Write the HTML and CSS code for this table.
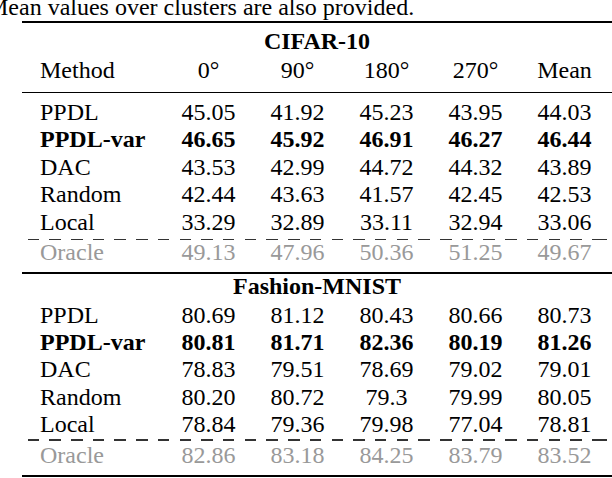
FILE: index.html
```html
<!DOCTYPE html>
<html>
<head>
<meta charset="utf-8">
<link rel="stylesheet" href="styles.css">
</head>
<body>
<div class="page">
<div class="caption">Mean values over clusters are also provided.</div>
<div class="table">
  <section class="group cifar">
    <div class="title">CIFAR-10</div>
    <div class="row head"><span>Method</span><span>0°</span><span>90°</span><span>180°</span><span>270°</span><span>Mean</span></div>
    <div class="body">
      <div class="row"><span>PPDL</span><span>45.05</span><span>41.92</span><span>45.23</span><span>43.95</span><span>44.03</span></div>
      <div class="row bold"><span>PPDL-var</span><span>46.65</span><span>45.92</span><span>46.91</span><span>46.27</span><span>46.44</span></div>
      <div class="row"><span>DAC</span><span>43.53</span><span>42.99</span><span>44.72</span><span>44.32</span><span>43.89</span></div>
      <div class="row"><span>Random</span><span>42.44</span><span>43.63</span><span>41.57</span><span>42.45</span><span>42.53</span></div>
      <div class="row"><span>Local</span><span>33.29</span><span>32.89</span><span>33.11</span><span>32.94</span><span>33.06</span></div>
    </div>
    <div class="dash"></div>
    <div class="row oracle"><span>Oracle</span><span>49.13</span><span>47.96</span><span>50.36</span><span>51.25</span><span>49.67</span></div>
  </section>
  <section class="group fashion">
    <div class="title">Fashion-MNIST</div>
    <div class="body">
      <div class="row"><span>PPDL</span><span>80.69</span><span>81.12</span><span>80.43</span><span>80.66</span><span>80.73</span></div>
      <div class="row bold"><span>PPDL-var</span><span>80.81</span><span>81.71</span><span>82.36</span><span>80.19</span><span>81.26</span></div>
      <div class="row"><span>DAC</span><span>78.83</span><span>79.51</span><span>78.69</span><span>79.02</span><span>79.01</span></div>
      <div class="row"><span>Random</span><span>80.20</span><span>80.72</span><span>79.3</span><span>79.99</span><span>80.05</span></div>
      <div class="row"><span>Local</span><span>78.84</span><span>79.36</span><span>79.98</span><span>77.04</span><span>78.81</span></div>
    </div>
    <div class="dash"></div>
    <div class="row oracle"><span>Oracle</span><span>82.86</span><span>83.18</span><span>84.25</span><span>83.79</span><span>83.52</span></div>
  </section>
</div>
</div>
</body>
</html>
```
FILE: styles.css
```css
html, body {
  margin: 0;
  padding: 0;
  background: #fff;
  overflow: hidden;
}
.page {
  width: 612px;
  height: 478px;
  overflow: hidden;
  font-family: "Liberation Serif", "Times New Roman", serif;
  font-size: 24px;
  color: #000;
}
.caption {
  height: 21px;
  line-height: 14px;
  margin-left: -13px;
  white-space: nowrap;
}
.table {
  margin-left: 22px;
  width: 590px;
  border-top: 2px solid #000;
}
.group {
  border-bottom: 2px solid #000;
}
.title {
  text-align: center;
  font-weight: bold;
}
.row {
  display: grid;
  grid-template-columns: 142px repeat(5, 89px);
  white-space: nowrap;
}
.row span {
  text-align: center;
}
.row span:first-child {
  text-align: left;
  padding-left: 18px;
}
.bold {
  font-weight: bold;
}
.oracle {
  color: #999;
  line-height: 24px;
  padding-bottom: 8px;
}
.dash {
  height: 1.5px;
  background: repeating-linear-gradient(90deg, #333 0 11.5px, transparent 11.5px 21.7px);
  background-position: -16px 0;
}

/* CIFAR section */
.cifar .title {
  padding-top: 5px;
  line-height: 27.5px;
}
.cifar .head {
  margin-top: 1.5px;
  line-height: 27.5px;
  padding-bottom: 7.5px;
  border-bottom: 1px solid #000;
}
.cifar .body {
  padding-top: 5.65px;
  line-height: 27.5px;
}
.cifar .dash {
  margin-top: 2.5px;
}

/* Fashion section */
.fashion .title {
  line-height: 25.5px;
  padding-bottom: 1.9px;
}
.fashion .body {
  line-height: 27.4px;
}
.fashion .dash {
  margin-top: 0.5px;
}
.fashion .oracle {
  padding-top: 2.35px;
}
```
